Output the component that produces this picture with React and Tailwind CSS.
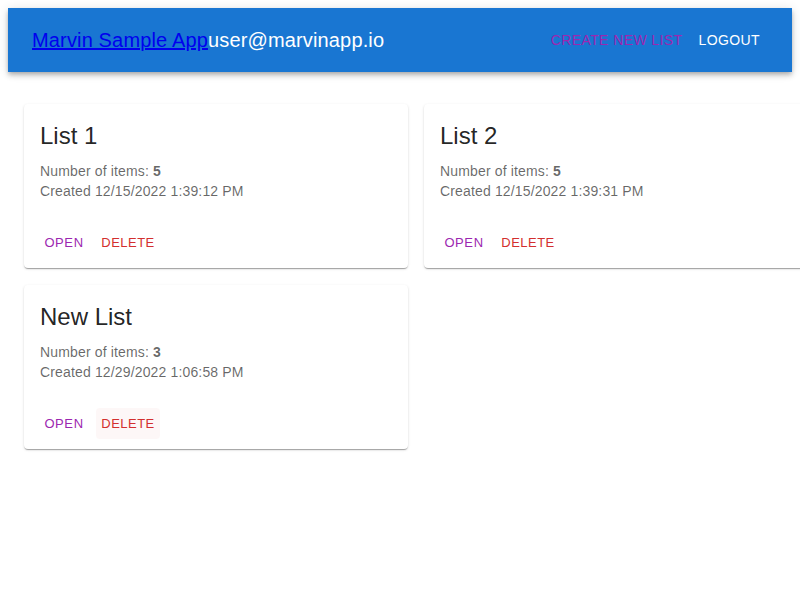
import React from "react";

const lists = [
  { name: "List 1", count: 5, created: "12/15/2022 1:39:12 PM" },
  { name: "List 2", count: 5, created: "12/15/2022 1:39:31 PM" },
  { name: "New List", count: 3, created: "12/29/2022 1:06:58 PM", hover: true },
];

function ListCard({ list }) {
  return (
    <div className="w-[384px] h-[164px] bg-white rounded-[4px] shadow-[0px_2px_1px_-1px_rgba(0,0,0,0.2),0px_1px_1px_0px_rgba(0,0,0,0.14),0px_1px_3px_0px_rgba(0,0,0,0.12)] flex flex-col">
      <div className="p-4 pb-[16px]">
        <div className="text-[24px] leading-[32px] text-[rgba(0,0,0,0.87)] mb-[9px]">{list.name}</div>
        <div className="text-[14px] leading-[20px] tracking-[0.15px] text-[rgba(0,0,0,0.6)]">
          Number of items: <b className="font-bold">{list.count}</b>
        </div>
        <div className="text-[14px] leading-[20px] tracking-[0.15px] text-[rgba(0,0,0,0.6)]">Created {list.created}</div>
      </div>
      <div className="flex items-center px-2 py-[10px]">
        <button className="min-w-16 h-[31px] px-[5px] rounded-[4px] text-[13px] tracking-[0.6px] uppercase text-[#9c27b0]">
          Open
        </button>
        <button
          className={
            list.hover
              ? "min-w-16 h-[31px] px-[5px] rounded-[4px] text-[13px] tracking-[0.46px] uppercase text-[#d32f2f] bg-[rgba(211,47,47,0.04)]"
              : "min-w-16 h-[31px] px-[5px] rounded-[4px] text-[13px] tracking-[0.46px] uppercase text-[#d32f2f]"
          }
        >
          Delete
        </button>
      </div>
    </div>
  );
}

export default function App() {
  return (
    <div className="w-screen h-screen overflow-hidden bg-white p-2 font-['Liberation_Sans',Arial,Helvetica,sans-serif]">
      <header className="h-16 bg-[#1976d2] flex items-center px-6 shadow-[0px_2px_4px_-1px_rgba(0,0,0,0.2),0px_4px_5px_0px_rgba(0,0,0,0.14),0px_1px_10px_0px_rgba(0,0,0,0.12)]">
        <div className="flex-1 flex items-center text-[20px] leading-[32px] tracking-[0.15px]">
          <a href="#" className="text-[#0000ee] underline">Marvin Sample App</a>
          <span className="text-white">user@marvinapp.io</span>
        </div>
        <button className="h-9 px-2 text-[14px] tracking-[0.4px] uppercase text-[#9c27b0]">Create new list</button>
        <button className="h-9 px-2 text-[14px] tracking-[0.4px] uppercase text-white">Logout</button>
      </header>
      <div className="grid grid-cols-[384px_384px] gap-x-4 gap-y-[17px] pl-4 pt-8">
        {lists.map((l) => (
          <ListCard key={l.name} list={l} />
        ))}
      </div>
    </div>
  );
}
